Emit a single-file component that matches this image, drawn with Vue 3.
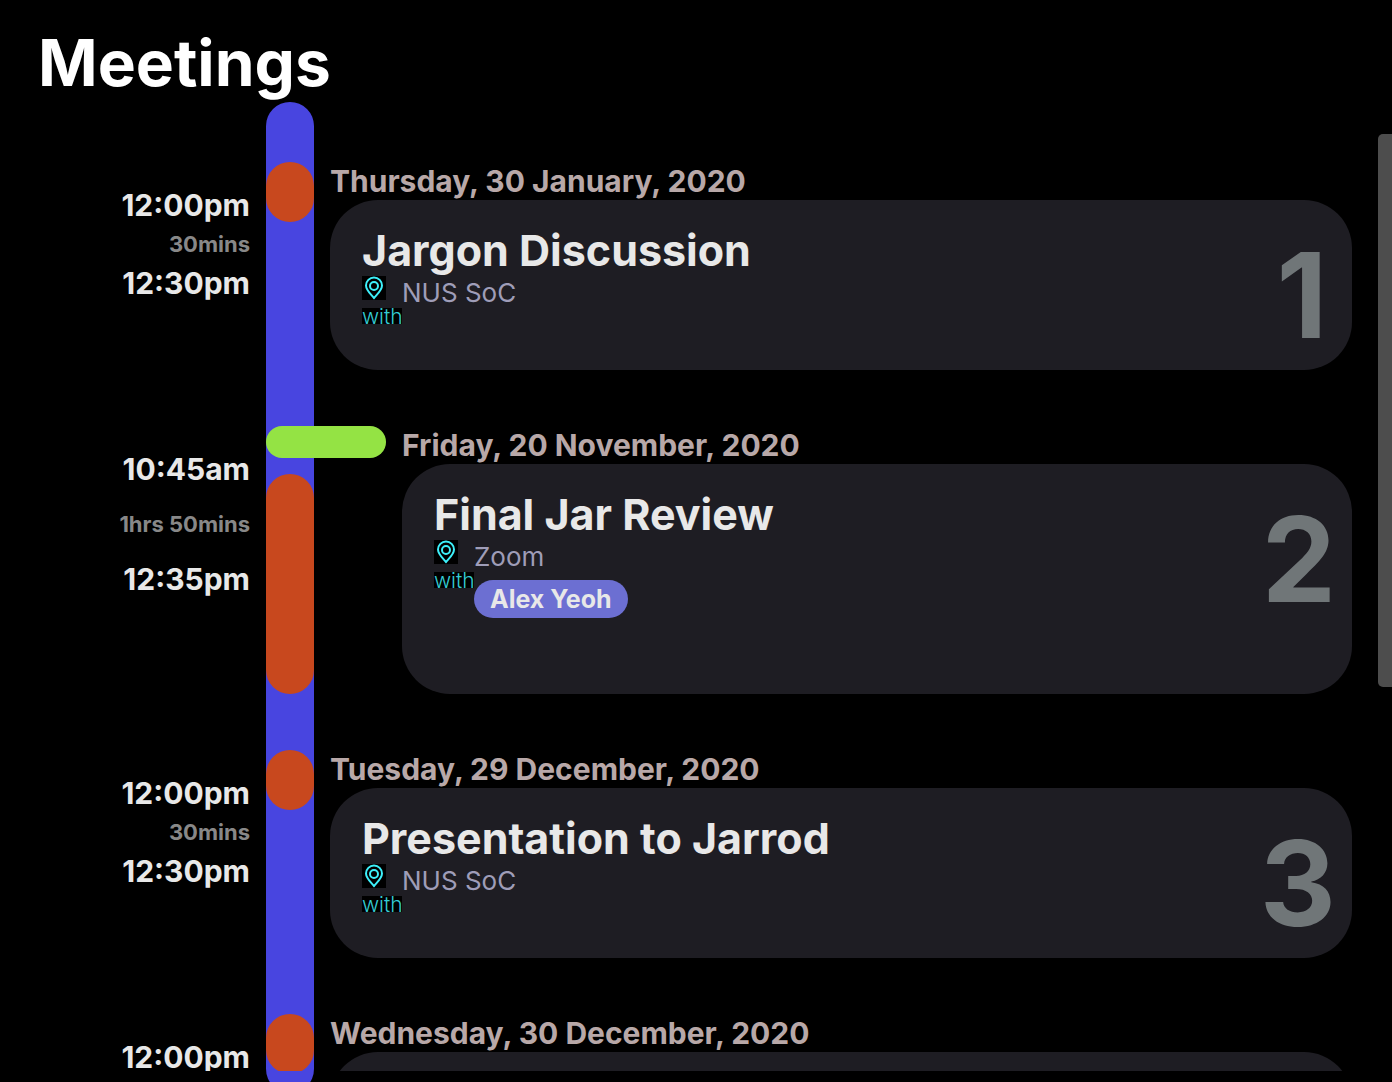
<script setup>
const meetings = [
  { id: 1, date: 'Thursday, 30 January, 2020', title: 'Jargon Discussion', place: 'NUS SoC', start: '12:00pm', end: '12:30pm', length: '30mins', minutes: 30, people: [] },
  { id: 2, date: 'Friday, 20 November, 2020', title: 'Final Jar Review', place: 'Zoom', start: '10:45am', end: '12:35pm', length: '1hrs 50mins', minutes: 110, people: ['Alex Yeoh'], selected: true },
  { id: 3, date: 'Tuesday, 29 December, 2020', title: 'Presentation to Jarrod', place: 'NUS SoC', start: '12:00pm', end: '12:30pm', length: '30mins', minutes: 30, people: [] },
  { id: 4, date: 'Wednesday, 30 December, 2020', start: '12:00pm', minutes: 30 },
]
</script>

<template>
  <main class="page">
    <h1>Meetings</h1>
    <div class="timeline">
      <div class="rail"></div>
      <div class="list">
        <article v-for="m in meetings" :key="m.id" class="meeting">
          <div class="times" :style="{ height: m.minutes + 38 + 'px' }">
            <time class="clock">{{ m.start }}</time>
            <span v-if="m.length" class="length">{{ m.length }}</span>
            <time v-if="m.end" class="clock">{{ m.end }}</time>
          </div>
          <div class="marks">
            <div v-if="m.selected" class="selected"></div>
            <div class="duration" :style="{ height: m.minutes * 2 + 'px' }"></div>
          </div>
          <div class="body">
            <p class="date">{{ m.date }}</p>
            <section class="card">
              <template v-if="m.title">
                <div class="info">
                  <h2>{{ m.title }}</h2>
                  <div class="place">
                    <svg class="pin" viewBox="0 0 24 24" fill="none" stroke="#3df0fa" stroke-width="2">
                      <path d="M12 22 C9 18.500 4 14.200 4 9.500 A8 8 0 0 1 20 9.500 C20 14.200 15 18.500 12 22 Z" />
                      <circle cx="12" cy="10" r="4" />
                    </svg>
                    <span>{{ m.place }}</span>
                  </div>
                  <div class="people">
                    <span class="with">with</span>
                    <span v-for="p in m.people" :key="p" class="person">{{ p }}</span>
                  </div>
                </div>
                <span class="number">{{ m.id }}</span>
              </template>
            </section>
          </div>
        </article>
      </div>
      <div class="scroll"><div class="thumb"></div></div>
    </div>
  </main>
</template>

<style>
body {
  margin: 0;
  background: #000;
}
</style>

<style scoped>
* {
  box-sizing: border-box;
}
.page {
  height: 100vh;
  display: flex;
  flex-direction: column;
  overflow: hidden;
  background: #000;
  color: #e8e8e8;
  font-family: Inter, "Liberation Sans", sans-serif;
  font-weight: 700;
}
h1 {
  margin: 0;
  padding: 24px 38px 0;
  font-size: 64px;
  line-height: 78px;
  color: #fff;
}
h2,
p {
  margin: 0;
}
.timeline {
  flex: 1;
  min-height: 0;
  display: grid;
  grid-template-columns: 266px 48px 1fr 14px;
  grid-template-rows: minmax(0, 1fr);
}
.rail {
  grid-area: 1 / 2;
  margin-bottom: -11px;
  border-radius: 24px;
  background: #4845e0;
}
.list {
  grid-area: 1 / 1 / 2 / 5;
  margin: 32px 0 11px;
  padding: 28px 40px;
  display: flex;
  flex-direction: column;
  gap: 56px;
  overflow: hidden;
}
.meeting {
  flex: none;
  display: grid;
  grid-template-columns: 210px auto 1fr;
  column-gap: 16px;
}
.times {
  margin-top: 24px;
  min-height: 116px;
  display: flex;
  flex-direction: column;
  justify-content: space-between;
  text-align: right;
}
.clock {
  font-size: 30px;
  line-height: 38px;
}
.length {
  font-size: 22px;
  line-height: 40px;
  color: #888;
}
.marks {
  display: flex;
  flex-direction: column;
  gap: 16px;
}
.selected {
  width: 120px;
  height: 32px;
  border-radius: 16px;
  background: #94e344;
}
.duration {
  width: 48px;
  border-radius: 24px;
  background: #c8481e;
}
.body {
  display: flex;
  flex-direction: column;
}
.date {
  font-size: 30px;
  line-height: 38px;
  color: #b8a8a8;
}
.card {
  flex: 1;
  min-height: 170px;
  padding: 24px 16px 0 32px;
  display: flex;
  align-items: flex-start;
  justify-content: space-between;
  border-radius: 48px;
  background: #1e1d23;
}
h2 {
  font-size: 43px;
  line-height: 52px;
}
.place {
  height: 32px;
  display: flex;
  gap: 16px;
  font-size: 26px;
  line-height: 34px;
  font-weight: 400;
  color: #9f9db8;
}
.pin {
  width: 24px;
  height: 24px;
  background: #000;
}
.people {
  display: flex;
  align-items: flex-start;
}
.with {
  width: 40px;
  height: 16px;
  background: #000;
  color: #34ccd4;
  font-size: 21px;
  line-height: 18px;
  font-weight: 300;
}
.person {
  margin-top: 8px;
  padding: 0 16px;
  border-radius: 19px;
  background: #6c6fd2;
  font-size: 25px;
  line-height: 38px;
}
.number {
  min-width: 68px;
  font-size: 118px;
  line-height: 142px;
  text-align: center;
  color: #707678;
}
.scroll {
  grid-area: 1 / 4;
  padding-top: 32px;
}
.thumb {
  height: 58.3%;
  border-radius: 5px 0 0 5px;
  background: #4d4d4d;
}
</style>
